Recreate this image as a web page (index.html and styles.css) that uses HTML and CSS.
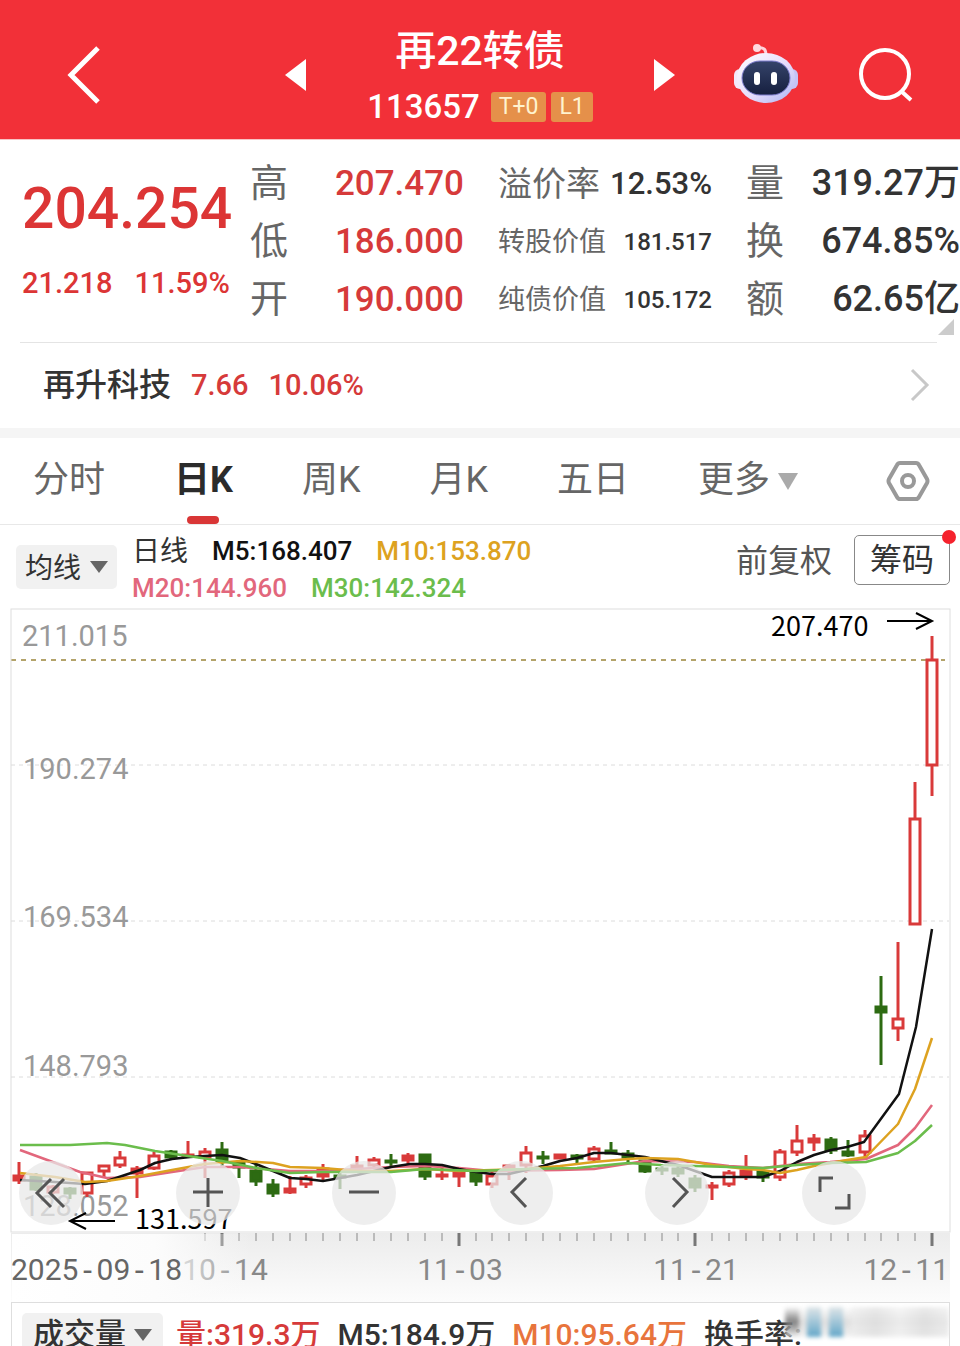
FILE: index.html
```html
<!DOCTYPE html>
<html lang="zh-CN">
<head>
  <meta charset="UTF-8">
  <title>再22转债 113657</title>
  <meta name="viewport" content="width=device-width, initial-scale=1.0">
  <link rel="stylesheet" href="styles.css">
</head>
<body>

<header class="topbar">
  <button class="icon-btn back" aria-label="返回">
    <svg width="34" height="58" viewBox="0 0 34 58"><path d="M31 2 L4 29 L31 56" fill="none" stroke="#fff" stroke-width="5"/></svg>
  </button>
  <div class="switcher">
    <button class="icon-btn" aria-label="上一个">
      <svg width="22" height="32" viewBox="0 0 22 32"><path d="M21 0 V32 L0 16 Z" fill="#fff"/></svg>
    </button>
    <div class="name">
      <h1>再22转债</h1>
      <div class="code">113657 <span class="tag">T+0</span><span class="tag">L1</span></div>
    </div>
    <button class="icon-btn" aria-label="下一个">
      <svg width="22" height="32" viewBox="0 0 22 32"><path d="M1 0 V32 L22 16 Z" fill="#fff"/></svg>
    </button>
  </div>
  <div class="tools">
    <button class="icon-btn" aria-label="智能助手">
      <svg width="64" height="62" viewBox="0 0 64 62">
        <defs>
          <linearGradient id="shell" x1="0" y1="0" x2="1" y2="1">
            <stop offset="0" stop-color="#fff"/>
            <stop offset=".55" stop-color="#e6dcfb"/>
            <stop offset="1" stop-color="#a9b4f3"/>
          </linearGradient>
          <linearGradient id="face" x1="0" y1="0" x2="0" y2="1">
            <stop offset="0" stop-color="#35446a"/>
            <stop offset="1" stop-color="#161f3f"/>
          </linearGradient>
        </defs>
        <path d="M23 4 C31 3 32 6 32 12" fill="none" stroke="#ffd3dc" stroke-width="3"/>
        <circle cx="23" cy="4" r="4" fill="#ffd9df"/>
        <rect x="0" y="25" width="12" height="20" rx="6" fill="#f3e8fb"/>
        <rect x="52" y="25" width="12" height="20" rx="6" fill="#c5c3f7"/>
        <ellipse cx="32" cy="34" rx="29" ry="25" fill="url(#shell)"/>
        <rect x="8" y="17" width="48" height="34" rx="18" fill="url(#face)" stroke="#7f7fd0" stroke-width="1"/>
        <rect x="20" y="28" width="6" height="13" rx="3" fill="#fff"/>
        <rect x="37" y="28" width="6" height="13" rx="3" fill="#fff"/>
      </svg>
    </button>
    <button class="icon-btn" aria-label="搜索">
      <svg width="54" height="54" viewBox="0 0 54 54"><g fill="none" stroke="#fff" stroke-width="4"><circle cx="26" cy="26" r="24"/><path d="M42 43 L52 52"/></g></svg>
    </button>
  </div>
</header>

<section class="quote">
  <div class="price">
    <div class="last">204.254</div>
    <div class="change"><span>21.218</span><span>11.59%</span></div>
  </div>
  <dl class="col up">
    <div><dt>高</dt><dd>207.470</dd></div>
    <div><dt>低</dt><dd>186.000</dd></div>
    <div><dt>开</dt><dd>190.000</dd></div>
  </dl>
  <dl class="col">
    <div class="mid"><dt>溢价率</dt><dd>12.53%</dd></div>
    <div class="small"><dt>转股价值</dt><dd>181.517</dd></div>
    <div class="small"><dt>纯债价值</dt><dd>105.172</dd></div>
  </dl>
  <dl class="col">
    <div><dt>量</dt><dd>319.27万</dd></div>
    <div><dt>换</dt><dd>674.85%</dd></div>
    <div><dt>额</dt><dd>62.65亿</dd></div>
  </dl>
  <svg class="corner" width="16" height="16" viewBox="0 0 16 16"><path d="M16 0 V16 H0 Z" fill="#ccc"/></svg>
</section>

<a class="stock" href="#">
  <span class="stock-name">再升科技</span>
  <span>7.66</span>
  <span>10.06%</span>
  <svg width="20" height="34" viewBox="0 0 20 34"><path d="M2 2 L17 17 L2 32" fill="none" stroke="#c8c8c8" stroke-width="3"/></svg>
</a>

<nav class="tabs">
  <button>分时</button>
  <button class="active">日K</button>
  <button>周K</button>
  <button>月K</button>
  <button>五日</button>
  <button class="more">更多<svg width="20" height="17" viewBox="0 0 20 17"><path d="M0 0 H20 L10 17 Z" fill="#aaa"/></svg></button>
  <button class="settings" aria-label="设置">
    <svg width="44" height="42" viewBox="0 0 44 42"><g fill="none" stroke="#999" stroke-width="4"><path d="M14 3 H30 Q32 3 33 5 L41 19 Q42 21 41 23 L33 37 Q32 39 30 39 H14 Q12 39 11 37 L3 23 Q2 21 3 19 L11 5 Q12 3 14 3 Z"/><circle cx="22" cy="21" r="6"/></g></svg>
  </button>
</nav>

<section class="legend">
  <label class="drop">
    <select aria-label="指标"><option>均线</option></select>
    <svg width="18" height="12" viewBox="0 0 18 12"><path d="M0 0 H18 L9 12 Z" fill="#666"/></svg>
  </label>
  <div class="ma">
    <div><span class="period">日线</span><span class="m5">M5:168.407</span><span class="m10">M10:153.870</span></div>
    <div><span class="m20">M20:144.960</span><span class="m30">M30:142.324</span></div>
  </div>
  <button class="adjust">前复权</button>
  <button class="chips">筹码<i class="dot"></i></button>
</section>

<section class="chart">
  <svg class="kline" viewBox="0 0 939 693">
    <defs>
      <linearGradient id="axisBg" x1="0" y1="0" x2="0" y2="1">
        <stop offset="0" stop-color="#ececec"/>
        <stop offset="1" stop-color="#fcfcfc"/>
      </linearGradient>
      <linearGradient id="fade" x1="0" y1="0" x2="1" y2="0">
        <stop offset="0" stop-color="#fff"/>
        <stop offset=".6" stop-color="#fcfcfc"/>
        <stop offset="1" stop-color="#fafafa" stop-opacity="0"/>
      </linearGradient>
    </defs>
    <rect x="0" y="624" width="939" height="69" fill="url(#axisBg)"/>
    <g class="grid">
      <path d="M0 156 H938"/>
      <path d="M0 312 H938"/>
      <path d="M0 468 H938"/>
    </g>
    <path class="last-line" d="M0 51 H934"/>
    <g class="price-labels">
      <text x="11" y="37">211.015</text>
      <text x="12" y="170">190.274</text>
      <text x="12" y="318">169.534</text>
      <text x="12" y="467">148.793</text>
      <text x="12" y="607">128.052</text>
    </g>
    <g id="candles"></g>
    <g id="lines"></g>
    <rect class="frame" x="0" y="0" width="939" height="623"/>
    <g id="ticks"></g>
    <g class="dates">
      <text x="214" y="671" text-anchor="middle">10<tspan class="dash">-</tspan>14</text>
      <rect x="1" y="625" width="239" height="68" fill="url(#fade)"/>
      <text class="first" x="0" y="671">2025<tspan class="dash">-</tspan>09<tspan class="dash">-</tspan>18</text>
      <text x="449" y="671" text-anchor="middle">11<tspan class="dash">-</tspan>03</text>
      <text x="685" y="671" text-anchor="middle">11<tspan class="dash">-</tspan>21</text>
      <text x="938" y="671" text-anchor="end">12<tspan class="dash">-</tspan>11</text>
    </g>
    <g class="marks">
      <text x="760" y="27">207.470</text>
      <path d="M876 12 H920 M905 4 L921 12 L905 20"/>
      <text x="124" y="620">131.597</text>
      <path d="M104 612 H60 M75 604 L59 612 L75 620"/>
    </g>
  </svg>
  <div class="controls">
    <button aria-label="最早"><svg viewBox="0 0 64 64"><path d="M32 18 L18 32 L32 46 M45 18 L31 32 L45 46"/></svg></button>
    <button aria-label="放大"><svg viewBox="0 0 64 64"><path d="M17 31 H47 M32 17 V46"/></svg></button>
    <button aria-label="缩小"><svg viewBox="0 0 64 64"><path d="M17 31 H47"/></svg></button>
    <button aria-label="向左"><svg viewBox="0 0 64 64"><path d="M37 17 L23 31 L37 46"/></svg></button>
    <button aria-label="向右"><svg viewBox="0 0 64 64"><path d="M28 17 L42 31 L28 46"/></svg></button>
    <button aria-label="全屏"><svg viewBox="0 0 64 64"><path d="M18 31 V17 H31 M47 33 V47 H33"/></svg></button>
  </div>
</section>

<section class="volume">
  <label class="drop">
    <select aria-label="副图指标"><option>成交量</option></select>
    <svg width="18" height="12" viewBox="0 0 18 12"><path d="M0 0 H18 L9 12 Z" fill="#666"/></svg>
  </label>
  <span class="vol">量:319.3万</span>
  <span class="v5">M5:184.9万</span>
  <span class="v10">M10:95.64万</span>
  <span class="turnover">换手率:</span>
  <div class="mosaic"><i></i><i class="blue"></i><i class="blue"></i><i class="wide"></i></div>
</section>

<script src="chart.js"></script>
</body>
</html>
```

FILE: styles.css
```css
* {
  box-sizing: border-box;
}

body {
  margin: 0;
  background: #fff;
  color: #333;
  font-family: Roboto, "Noto Sans CJK SC", sans-serif;
  line-height: 1.2;
  overflow-x: hidden;
}

button, select {
  border: 0;
  padding: 0;
  margin: 0;
  background: none;
  color: inherit;
  font: inherit;
}

svg {
  display: block;
}

/* header */
.topbar {
  display: grid;
  grid-template-columns: 1fr 390px 1fr;
  align-items: center;
  height: 140px;
  padding-top: 10px;
  background: #f23038;
  border-bottom: 1px solid #f8c4c4;
  color: #fff;
}

.back {
  margin-left: 67px;
}

.switcher, .tools {
  display: flex;
  align-items: center;
  justify-content: space-between;
}

.name {
  padding-top: 8px;
  text-align: center;
}

.name h1 {
  margin: 0;
  font-size: 41px;
  font-weight: 500;
  line-height: 56px;
}

.code {
  display: flex;
  align-items: center;
  gap: 5px;
  font-size: 33px;
  font-weight: 500;
  line-height: 56px;
}

.tag {
  padding: 0 8px;
  border-radius: 3px;
  background: #e5904a;
  color: #fff3cf;
  font-size: 23px;
  font-weight: 400;
  line-height: 30px;
}

.code .tag:first-of-type {
  margin-left: 6px;
}

.tools {
  justify-content: flex-end;
  gap: 61px;
  padding-right: 47px;
}

/* quote */
.quote {
  position: relative;
  display: grid;
  grid-template-columns: 194px 1fr 1fr 1fr;
  gap: 34px;
  height: 202px;
  padding: 15px 0 0 22px;
  white-space: nowrap;
}

.price {
  color: #dc3535;
  font-weight: 500;
}

.last {
  padding-top: 18px;
  font-size: 57px;
  line-height: 72px;
}

.change {
  display: flex;
  gap: 22px;
  padding-top: 18px;
  font-size: 29px;
  line-height: 40px;
}

.col {
  margin: 0;
}

.col div {
  display: flex;
  justify-content: space-between;
  align-items: center;
  height: 58px;
}

.col dt {
  color: #666;
  font-size: 38px;
}

.col dd {
  margin: 0;
  font-size: 36px;
  font-weight: 500;
}

.up dd {
  color: #d63a3a;
  font-size: 35px;
}

.col .mid dt {
  font-size: 34px;
}

.col .mid dd {
  font-size: 31px;
}

.col .small dt {
  font-size: 27px;
}

.col .small dd {
  font-size: 24px;
}

.corner {
  position: absolute;
  right: 6px;
  bottom: 7px;
}

/* related stock */
.stock {
  display: flex;
  align-items: center;
  gap: 20px;
  height: 96px;
  margin: 0;
  padding: 0 30px 0 43px;
  border-bottom: 10px solid #f5f5f5;
  background: linear-gradient(#e4e4e4, #e4e4e4) 20px 0 / calc(100% - 43px) 1px no-repeat;
  color: #d63a3a;
  font-size: 29px;
  font-weight: 500;
  text-decoration: none;
}

.stock-name {
  color: #333;
  font-size: 32px;
}

.stock svg {
  margin-left: auto;
}

/* tabs */
.tabs {
  display: flex;
  align-items: stretch;
  gap: 69px;
  height: 87px;
  padding: 0 30px 0 33px;
  border-bottom: 1px solid #e8e8e8;
  color: #666;
  font-size: 36px;
}

.tabs .active {
  position: relative;
  color: #2b2b2b;
  font-weight: 700;
}

.tabs .active::after {
  content: "";
  position: absolute;
  left: calc(50% - 16px);
  bottom: 0;
  width: 32px;
  height: 8px;
  border-radius: 4px;
  background: #d93636;
}

.tabs .more {
  display: flex;
  align-items: center;
  gap: 8px;
}

.settings {
  margin-left: auto;
}

/* moving average legend */
.legend {
  display: flex;
  align-items: center;
  height: 84px;
  padding: 0 10px 0 16px;
}

.drop {
  display: flex;
  align-items: center;
  gap: 8px;
  height: 44px;
  padding: 0 9px;
  border-radius: 5px;
  background: #f1f1f1;
  color: #333;
  font-size: 28px;
}

.drop select {
  appearance: none;
  padding-top: 4px;
  line-height: 44px;
}

.ma {
  margin-left: 15px;
  padding-top: 6px;
  font-size: 26px;
  font-weight: 500;
  line-height: 37px;
}

.ma div {
  display: flex;
  gap: 24px;
}

.period {
  color: #333;
  font-size: 28px;
  font-weight: 400;
}

.m5 { color: #111; }
.m10 { color: #dda220; }
.m20 { color: #e2677c; }
.m30 { color: #6bbd4c; }

.adjust {
  margin: 0 22px 12px auto;
  color: #555;
  font-size: 32px;
}

.chips {
  position: relative;
  height: 50px;
  margin-bottom: 14px;
  padding: 0 15px;
  border: 1px solid #888;
  border-radius: 5px;
  font-size: 32px;
}

.dot {
  position: absolute;
  top: -6px;
  right: -7px;
  width: 14px;
  height: 14px;
  border-radius: 50%;
  background: #f5222d;
}

/* chart */
.chart {
  position: relative;
  margin: 0 10px 0 11px;
}

.kline {
  width: 100%;
  height: auto;
  overflow: visible;
}

.frame {
  fill: none;
  stroke: #dedede;
}

.grid path {
  stroke: #dcdcdc;
  stroke-dasharray: 4 4;
}

.last-line {
  stroke: #b3a36a;
  stroke-width: 2;
  stroke-dasharray: 5 5;
}

.price-labels {
  fill: #999;
  font-size: 29px;
}

.dates {
  fill: #888;
  font-size: 30px;
}

.dates .first {
  fill: #666;
}

.dash {
  font-family: "DejaVu Sans Mono", monospace;
}

.marks {
  fill: #000;
  font-size: 27px;
  font-family: "Noto Sans CJK SC", sans-serif;
}

.marks path {
  fill: none;
  stroke: #000;
  stroke-width: 2;
}

.up-candle { stroke: #d93a3a; fill: #fff; }
.up-solid { stroke: #d93a3a; fill: #d93a3a; }
.down-candle { stroke: #2d6b12; fill: #2d6b12; }

#candles {
  stroke-width: 3;
}

#lines path {
  fill: none;
  stroke-width: 2.5px;
  stroke-linejoin: round;
}

#ticks path {
  stroke: #bbb;
  stroke-width: 2;
}

#ticks .major {
  stroke: #777;
  stroke-width: 3;
}

/* buttons floating over the candles */
.controls {
  position: absolute;
  left: 8px;
  right: 84px;
  bottom: 77px;
  display: flex;
  justify-content: space-between;
}

.controls button {
  width: 64px;
  height: 64px;
  border-radius: 50%;
  background: rgba(232, 232, 232, 0.75);
}

.controls path {
  fill: none;
  stroke: #555;
  stroke-width: 3;
}

/* volume panel */
.volume {
  position: relative;
  display: flex;
  align-items: flex-start;
  gap: 17px;
  height: 44px;
  margin: 0 10px 0 11px;
  padding: 10px 0 0 10px;
  border: 1px solid #dedede;
  border-bottom: 0;
  overflow: hidden;
  font-size: 30px;
  font-weight: 500;
  line-height: 44px;
  white-space: nowrap;
}

.volume .drop {
  margin-right: -4px;
  padding: 0 11px;
  font-size: 31px;
}

.volume .drop select {
  padding-top: 0;
}

.vol { color: #d63a3a; }
.v5 { color: #333; }
.v10 { color: #e8743c; }
.turnover { color: #333; }

.mosaic {
  position: absolute;
  top: 4px;
  right: 0;
  display: flex;
  gap: 8px;
  width: 164px;
  height: 30px;
  background: linear-gradient(rgba(245, 245, 245, 0.2), rgba(200, 200, 200, 0.6), rgba(240, 240, 240, 0.9));
  filter: blur(2px);
}

.mosaic i {
  width: 14px;
  background: linear-gradient(transparent, rgba(90, 90, 90, 0.7), transparent);
}

.mosaic .blue {
  background: linear-gradient(#dfe5e8, #62a6c8);
}

.mosaic .wide {
  flex: 1;
  background: linear-gradient(90deg, #eee, #ddd, #f2f2f2, #ddd, #eee);
  opacity: 0.6;
}
```

FILE: chart.js
```javascript
const NS = "http://www.w3.org/2000/svg";
const STEP = 16.91;
const FIRST_X = 8;

// [type, body top, body bottom, high, low]; r = hollow up, s = solid up, g = down
const candles = [
  ["s", 567, 571, 553, 575], ["g", 568, 580, 564, 582], ["r", 578, 583, 576, 585],
  ["g", 580, 584, 578, 590], ["r", 564, 584, 563, 588], ["r", 557, 562, 556, 568],
  ["r", 549, 556, 542, 559], ["s", 560, 564, 557, 589], ["r", 547, 559, 543, 561],
  ["g", 543, 548, 541, 551], ["s", 546, 547, 532, 549], ["r", 543, 548, 539, 569],
  ["g", 541, 552, 533, 559], ["g", 554, 558, 553, 569], ["g", 562, 572, 555, 577],
  ["g", 576, 584, 570, 588], ["r", 580, 583, 567, 585], ["r", 569, 575, 566, 579],
  ["s", 560, 567, 555, 571], ["g", 567, 568, 563, 580], ["s", 557, 558, 547, 560],
  ["r", 551, 556, 548, 559], ["g", 552, 553, 545, 557], ["s", 547, 551, 544, 555],
  ["g", 546, 567, 545, 571], ["s", 566, 567, 559, 571], ["s", 564, 567, 563, 578],
  ["g", 564, 572, 563, 577], ["r", 567, 575, 563, 579], ["s", 557, 560, 555, 571],
  ["r", 544, 556, 537, 564], ["g", 548, 549, 542, 555], ["s", 546, 549, 545, 550],
  ["g", 547, 549, 545, 556], ["r", 540, 550, 537, 552], ["g", 542, 544, 533, 545],
  ["g", 545, 548, 541, 555], ["g", 552, 562, 551, 564], ["g", 560, 561, 557, 566],
  ["g", 560, 564, 557, 568], ["g", 570, 578, 566, 583], ["s", 577, 578, 573, 591],
  ["r", 564, 575, 561, 578], ["s", 562, 566, 546, 571], ["g", 563, 568, 561, 573],
  ["r", 543, 568, 540, 572], ["r", 532, 543, 516, 547], ["s", 530, 533, 525, 542],
  ["g", 531, 541, 528, 545], ["g", 543, 546, 531, 548], ["r", 527, 543, 521, 549],
  ["g", 398, 403, 367, 456], ["r", 410, 419, 333, 432], ["r", 210, 315, 173, 316],
  ["r", 51, 156, 27, 187]
];

const averages = [
  { color: "#e2677c", d: "9,541 39,552 69,563 96,569 129,568 161,563 194,558 229,558 279,562 312,562 346,560 380,558 414,557 448,559 481,562 549,561 583,560 634,552 684,553 718,557 752,559 786,555 819,553 855,550 887,536 904,519 921,496" },
  { color: "#111", d: "9,571 44,573 74,575 96,572 114,566 129,561 144,554 161,550 179,548 194,547 211,546 229,549 245,555 262,562 279,569 295,570 312,572 329,569 346,566 363,562 380,558 399,555 414,555 431,556 448,560 465,563 481,565 498,565 515,561 532,557 549,552 566,549 583,544 600,544 617,546 634,548 650,552 667,556 684,562 701,568 718,568 752,568 769,562 786,553 803,546 820,541 836,538 853,533 888,485 905,418 921,320" },
  { color: "#dda220", d: "9,564 44,568 74,573 96,572 129,567 161,561 194,555 229,552 262,554 279,558 312,559 346,562 380,562 414,560 448,562 481,561 515,560 549,557 583,553 617,550 634,549 667,550 684,553 701,556 735,560 752,561 769,564 786,561 803,557 836,551 855,548 887,515 904,480 921,429" },
  { color: "#6bbd4c", d: "9,536 59,536 96,534 114,536 144,542 177,547 211,552 245,559 279,564 312,563 380,563 414,560 465,562 515,560 566,559 617,554 650,556 684,557 718,558 752,559 786,556 819,554 855,553 887,544 904,532 921,516" }
];

function add(parent, tag, attrs) {
  const el = document.createElementNS(NS, tag);
  for (const key in attrs) {
    el.setAttribute(key, attrs[key]);
  }
  document.getElementById(parent).appendChild(el);
}

const names = { r: "up-candle", s: "up-solid", g: "down-candle" };

candles.forEach(([type, top, bottom, high, low], i) => {
  const x = Math.round(FIRST_X + i * STEP);
  add("candles", "path", { class: names[type], d: `M${x} ${high} V${low}` });
  add("candles", "rect", { class: names[type], x: x - 5, y: top, width: 10, height: bottom - top });
});

averages.forEach(line => {
  add("lines", "path", { stroke: line.color, d: "M" + line.d.replace(/ /g, " L") });
});

// ticks under the frame, long ones at the dated days
const major = [12, 26, 40, 54];
for (let i = 11; i < candles.length; i++) {
  const x = Math.round(FIRST_X + i * STEP);
  const long = major.includes(i);
  add("ticks", "path", { class: long ? "major" : "minor", d: `M${x} 624 V${long ? 637 : 632}` });
}
```
